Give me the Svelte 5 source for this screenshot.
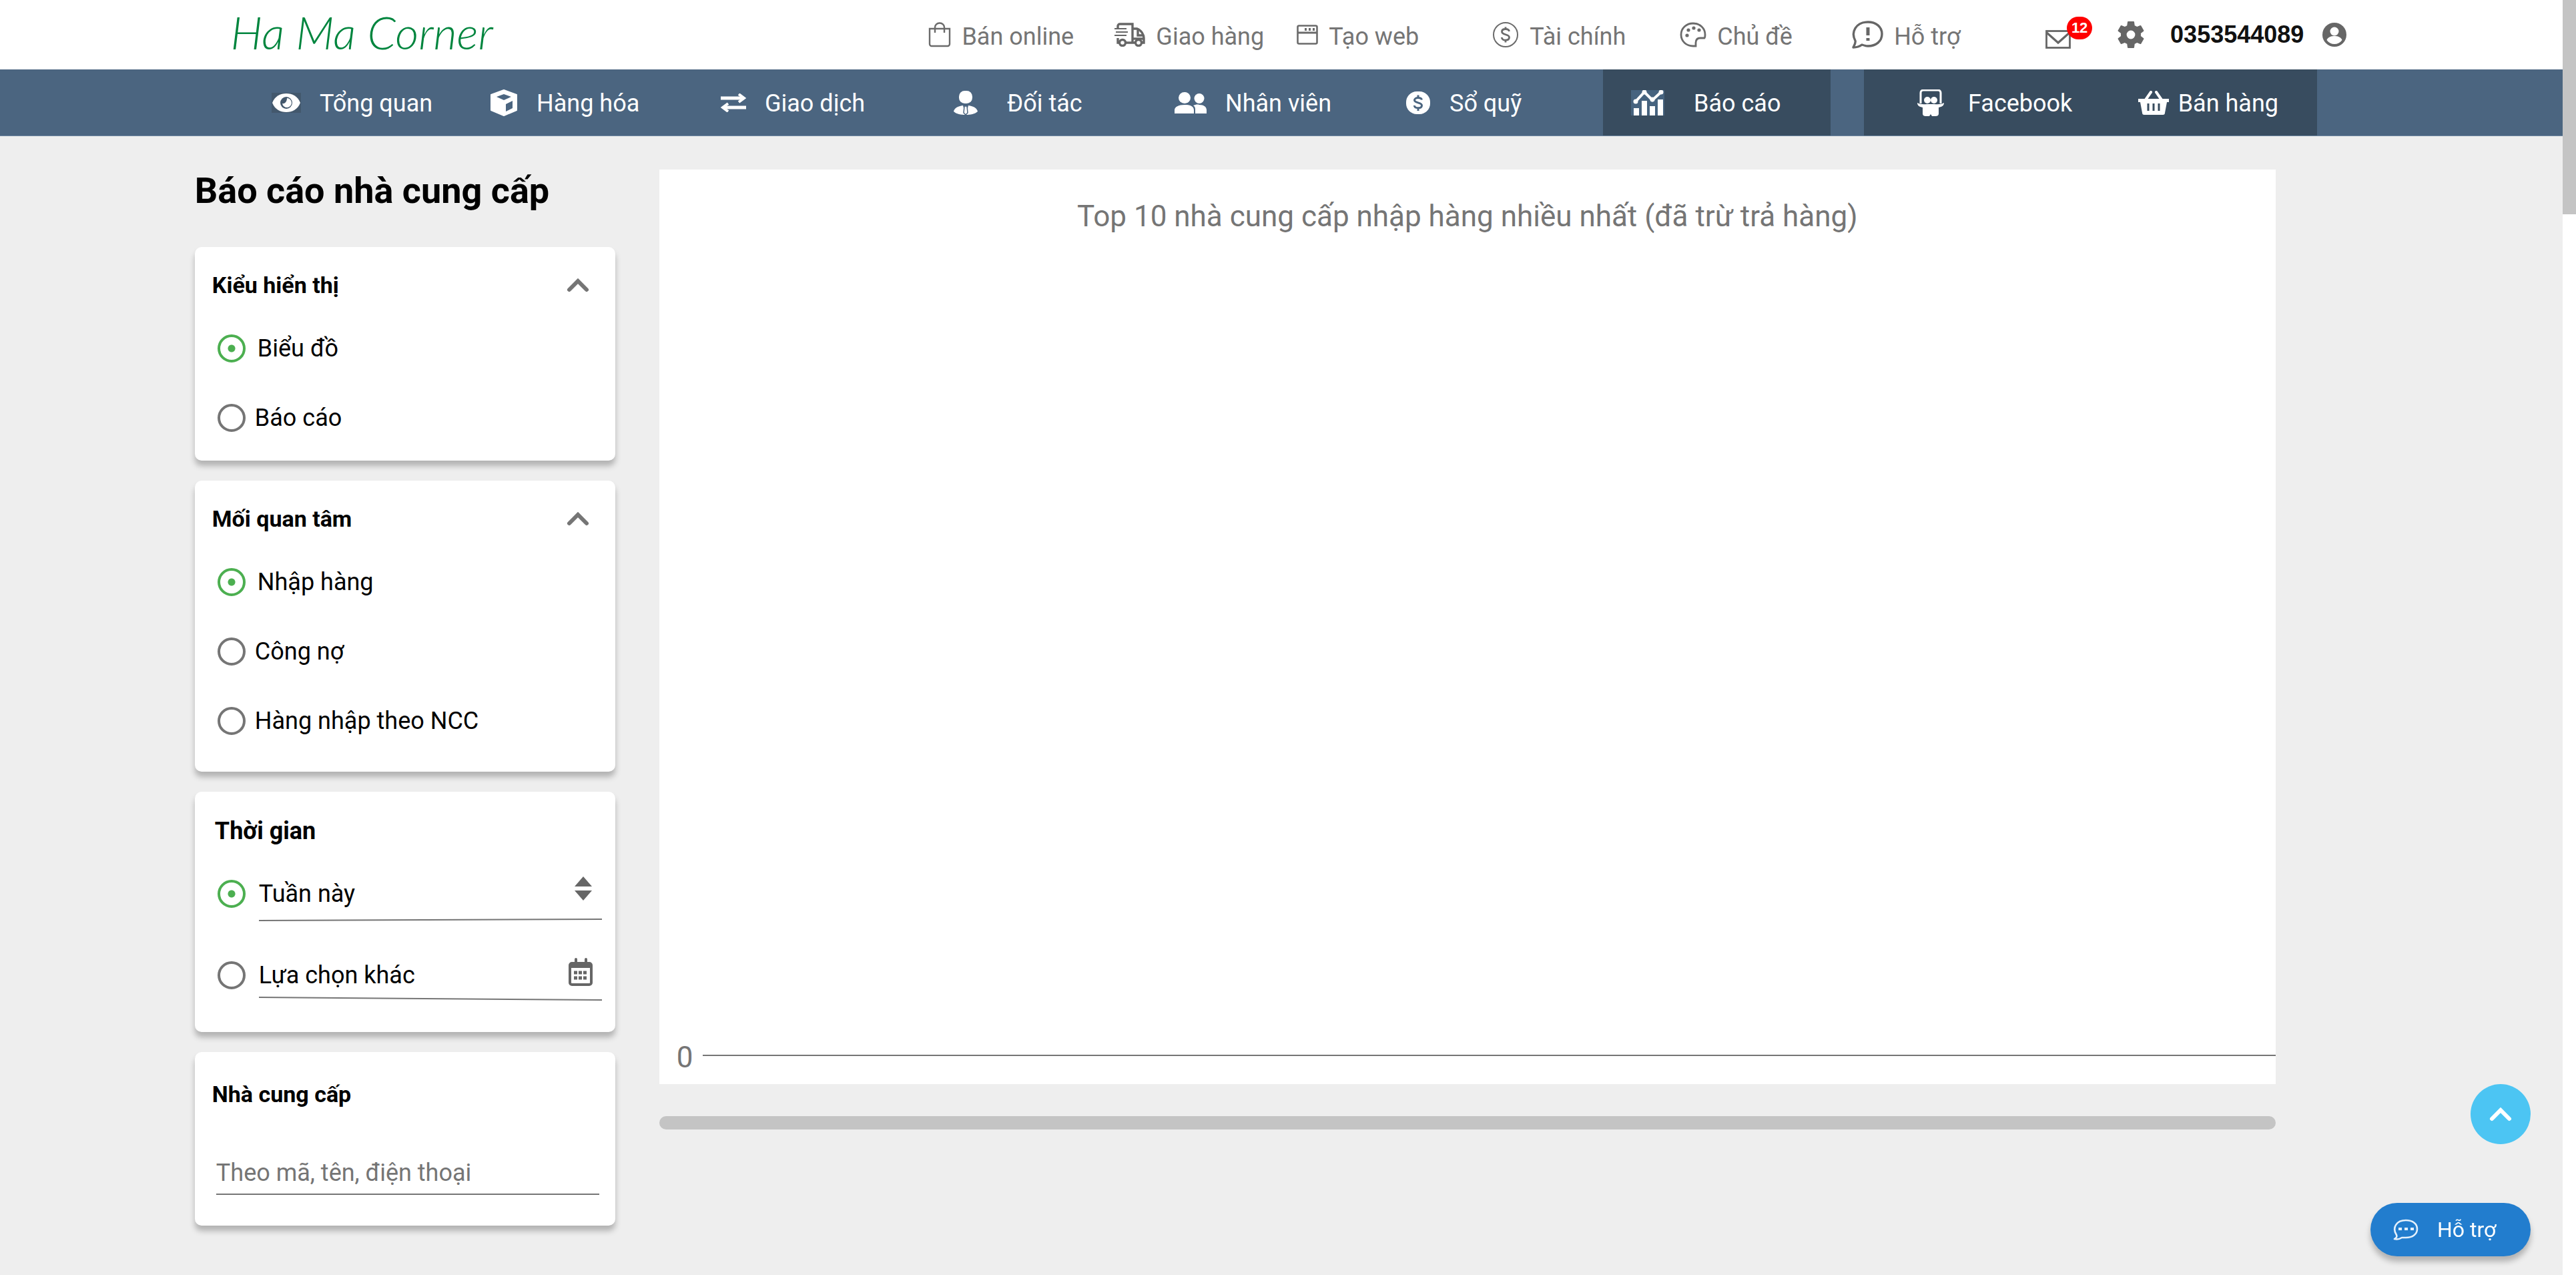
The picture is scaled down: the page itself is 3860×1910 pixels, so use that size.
<script>
  const topItems = [
    { icon: 'bag', label: 'Bán online' },
    { icon: 'truck', label: 'Giao hàng' },
    { icon: 'window', label: 'Tạo web' },
    { icon: 'coin', label: 'Tài chính' },
    { icon: 'palette', label: 'Chủ đề' },
    { icon: 'help', label: 'Hỗ trợ' }
  ];
  const navItems = [
    { icon: 'eye', label: 'Tổng quan' },
    { icon: 'box', label: 'Hàng hóa' },
    { icon: 'swap', label: 'Giao dịch' },
    { icon: 'partner', label: 'Đối tác', gap: 'wide' },
    { icon: 'staff', label: 'Nhân viên' },
    { icon: 'cash', label: 'Sổ quỹ' }
  ];
  let view = $state('Biểu đồ');
  let focus = $state('Nhập hàng');
  let time = $state('week');
  const views = ['Biểu đồ', 'Báo cáo'];
  const focuses = ['Nhập hàng', 'Công nợ', 'Hàng nhập theo NCC'];
</script>

{#snippet icon(name)}
  {#if name === 'bag'}
    <svg width="34" height="38" viewBox="0 0 34 38" fill="none" stroke="#6b6b6b" stroke-width="2.4"><path d="M2 10h30v23a3 3 0 0 1-3 3H5a3 3 0 0 1-3-3z" /><path d="M10 16V8a7 6.5 0 0 1 14 0v8" /></svg>
  {:else if name === 'truck'}
    <svg width="46" height="36" viewBox="0 0 46 36" fill="none" stroke="#666" stroke-width="3.4"><path d="M5 8V5a3 3 0 0 1 3-3h19v28H17M5 23v7h2M27 9h7c6 2 10 9 10 14v7h-3M27 30h3M35 10v9h8" /><path d="M0 9h18M2 14h18M0 19h18" stroke-width="2.2" /><circle cx="12" cy="30" r="4.5" /><circle cx="36" cy="30" r="4.5" /><path d="M27 24h17" /></svg>
  {:else if name === 'window'}
    <svg width="32" height="30" viewBox="0 0 32 30" fill="none" stroke="#6b6b6b" stroke-width="2.6"><rect x="1.5" y="1.5" width="29" height="27" rx="2" /><path d="M1 12h30" stroke-width="3" /><path d="M12 7h3M18 7h3M24 7h3" stroke-width="4" /></svg>
  {:else if name === 'coin'}
    <svg width="40" height="40" viewBox="0 0 40 40" fill="none" stroke="#6b6b6b" stroke-width="2"><circle cx="20" cy="20" r="18" /><path d="M25.500 15c-.5-2.500-2.500-3.500-5.500-3.500-3.200 0-5.500 1.500-5.500 4 0 5.500 11 3 11 8.500 0 2.800-2.500 4.200-5.500 4.200-3.200 0-5.500-1.500-5.700-4.200M20 8.500v3M20 28v3.500" stroke-width="2.800" /></svg>
  {:else if name === 'palette'}
    <svg width="40" height="38" viewBox="0 0 40 38" fill="none" stroke="#6b6b6b" stroke-width="2.800"><path d="M38 19C38 9 30 2 20 2S2 9 2 19s8 17 18 17h4v-5c0-5 3-7 7-7h6c1-1 1-3 1-5z" /><g fill="#6b6b6b" stroke="none"><circle cx="11" cy="20" r="2.600" /><circle cx="13" cy="12" r="2.600" /><circle cx="21" cy="9" r="2.600" /><circle cx="29" cy="12" r="2.600" /></g></svg>
  {:else if name === 'help'}
    <svg width="48" height="42" viewBox="0 0 48 42" fill="none" stroke="#666" stroke-width="3.400"><path d="M3 40c2-4 4-7 3-10C-1 17 7 2 25 2c12 0 21 7 21 18s-9 18-21 18c-3 0-6-1-9-2-4 3-8 4-13 4z" stroke-linejoin="round" /><path d="M25 10v12M25 26v4" stroke-width="5" /></svg>
  {:else if name === 'mail'}
    <svg width="38" height="28" viewBox="0 0 38 28" fill="none" stroke="#666" stroke-width="2.800"><rect x="1.500" y="1.500" width="35" height="25" /><path d="M2 4l17 15L36 4" stroke-width="3.200" /></svg>
  {:else if name === 'gear'}
    <svg width="40" height="40" viewBox="2 2 20 20" fill="#666"><path d="M19.430 12.980c.040-.320.070-.640.070-.980s-.030-.660-.070-.980l2.110-1.650c.190-.150.240-.420.120-.640l-2-3.460c-.120-.220-.390-.300-.610-.220l-2.490 1c-.520-.400-1.080-.730-1.690-.980l-.380-2.650C14.460 2.180 14.250 2 14 2h-4c-.250 0-.460.180-.490.420l-.380 2.650c-.610.250-1.170.590-1.690.980l-2.490-1c-.230-.090-.490 0-.610.220l-2 3.460c-.130.220-.070.490.120.640l2.110 1.650c-.040.320-.070.650-.070.980s.030.660.070.980l-2.110 1.650c-.190.150-.240.420-.120.640l2 3.460c.120.220.390.300.610.220l2.490-1c.520.400 1.080.730 1.690.980l.380 2.650c.030.240.240.420.490.420h4c.250 0 .460-.180.490-.420l.380-2.650c.610-.250 1.170-.590 1.690-.980l2.490 1c.230.090.490 0 .610-.220l2-3.460c.120-.220.070-.490-.120-.640zM12 15.200a3.200 3.200 0 1 1 0-6.400 3.200 3.200 0 0 1 0 6.400z" /></svg>
  {:else if name === 'user'}
    <svg width="36" height="36" viewBox="0 0 36 36"><circle cx="18" cy="18" r="18" fill="#666" /><circle cx="18" cy="13" r="6.500" fill="#fff" /><path d="M6.500 26c2-5 7-6 11.500-6s9.500 1 11.500 6c-3 4-7 6-11.500 6s-8.500-2-11.500-6z" fill="#fff" /></svg>
  {:else if name === 'eye'}
    <svg width="44" height="30" viewBox="0 0 44 30"><path fill="#43586d" d="M0 0h44v30H0z" /><path d="M1 15C5 5 13 1 22 1s17 4 21 14c-4 10-12 14-21 14S5 25 1 15z" fill="#fff" /><circle cx="22" cy="15" r="9" fill="#43586d" /><path d="M23 8a7 7 0 1 1-7 8c4 1 7-3 7-8z" fill="#fff" /></svg>
  {:else if name === 'box'}
    <svg width="42" height="40" viewBox="0 0 42 40"><path d="M21 1l19 7v23l-19 8-19-8V8z" fill="#fff" stroke="#fff" stroke-width="2" stroke-linejoin="round" /><path d="M21 7l11 4-11 5-11-5zM24 22l10-5v11l-10 5z" fill="#4b6580" /></svg>
  {:else if name === 'swap'}
    <svg width="38" height="28" viewBox="0 0 38 28" fill="none" stroke="#fff" stroke-width="5"><path d="M0 7h34M4 21h34" /><path d="M27 1l8 6-8 6M11 15l-8 6 8 6" stroke-width="4" /></svg>
  {:else if name === 'partner'}
    <svg width="36" height="36" viewBox="0 0 36 36" fill="#fff"><rect x="8" y="0" width="20" height="19" rx="8.500" /><path d="M14 22l3 12h2l3-12c8 1 13 4 14 9-4 4-11 5-18 5S4 35 0 31c1-5 6-8 14-9z" /><path d="M16 23h4l1 10-3 3-3-3z" stroke="#4b6580" stroke-width="1.500" /></svg>
  {:else if name === 'staff'}
    <svg width="48" height="32" viewBox="0 0 48 32" fill="#fff"><ellipse cx="15" cy="8.500" rx="9" ry="8.500" /><ellipse cx="37" cy="9.500" rx="7.500" ry="7.500" /><path d="M0 32v-5c0-5 6-8 15-8s14 3 14 8v5zM31 32v-6c0-3-1-5-3-6 3-1 6-2 9-1 7 0 11 3 11 8v5z" /></svg>
  {:else if name === 'cash'}
    <svg width="38" height="34" viewBox="0 0 38 34"><rect x="1" y="0" width="36" height="34" rx="16" fill="#fff" /><path d="M24.500 12.500c-.5-2-2.500-3-5.500-3-3.200 0-5.500 1.300-5.500 3.500 0 4.800 11 3 11 8 0 2.500-2.500 3.800-5.500 3.800-3.200 0-5.500-1.300-5.700-3.800M19 5.500v4M19 25v4" fill="none" stroke="#4b6580" stroke-width="3" /></svg>
  {:else if name === 'report'}
    <svg width="50" height="38" viewBox="0 0 50 38"><path fill="#46637f" d="M0 0h50v38H0z" /><path d="M4 27h8v11H4zM16 16h8v22h-8zM28 24h8v14h-8zM40 14h8v24h-8z" fill="#fff" /><path d="M7 17L20 3l12 12L45 3" fill="none" stroke="#fff" stroke-width="4" /><g fill="#fff"><circle cx="7" cy="17" r="3.500" /><circle cx="20" cy="3" r="3.500" /><circle cx="32" cy="14" r="3.500" /><circle cx="45" cy="3" r="3.500" /></g></svg>
  {:else if name === 'robot'}
    <svg width="40" height="40" viewBox="0 0 40 40" fill="#fff"><path d="M5 21V5a4 4 0 0 1 4-4h22a4 4 0 0 1 4 4v16" fill="none" stroke="#fff" stroke-width="3" /><circle cx="15" cy="16" r="5" /><circle cx="25" cy="16" r="5" /><path d="M0 20c4 3 10 2 20 2s16 1 20-2c0 4-3 6-8 7v9c0 3-2 4-5 4h-5l-2-3-2 3h-5c-3 0-5-1-5-4v-9c-5-1-8-3-8-7z" /></svg>
  {:else if name === 'basket'}
    <svg width="46" height="36" viewBox="0 0 46 36"><path d="M10 15L19 2M36 15L27 2" fill="none" stroke="#fff" stroke-width="4" stroke-linecap="round" /><path d="M0 12h46v5h-3l-3 16c0 2-1 3-3 3H9c-2 0-3-1-3-3L3 17H0z" fill="#fff" /><path d="M15 19v11M23 19v11M31 19v11" stroke="#384c5f" stroke-width="3" /></svg>
  {:else if name === 'chevron'}
    <svg width="36" height="24" viewBox="0 0 36 24" fill="none" stroke="currentColor" stroke-width="6" stroke-linecap="round"><path d="M5 19L18 6l13 13" /></svg>
  {:else if name === 'sort'}
    <svg width="28" height="36" viewBox="0 0 28 36" fill="#666"><path d="M14 0l13 15H1zM14 36L1 21h26z" /></svg>
  {:else if name === 'calendar'}
    <svg width="36" height="42" viewBox="0 0 36 42"><path d="M11 2v8M26 2v8" stroke="#666" stroke-width="4" stroke-linecap="round" /><rect x="2" y="8" width="32" height="32" rx="3" fill="none" stroke="#666" stroke-width="4" /><path d="M2 8h32v7H2z" fill="#666" /><path d="M8 22h5M15 22h5M22 22h5M8 30h5M15 30h5M22 30h5" stroke="#666" stroke-width="5" /></svg>
  {:else if name === 'chat'}
    <svg width="38" height="32" viewBox="0 0 38 32" fill="none" stroke="#e4f0fb" stroke-width="2.600"><path d="M2 30c3-2 4-3 3-6C-2 13 5 2 19 2c10 0 17 5 17 13s-7 13-17 13h-6c-3 2-7 3-11 2z" stroke-linejoin="round" /><path d="M8 15h5M17 15h5M26 15h5" stroke-width="4" /></svg>
  {/if}
{/snippet}

<header class="top">
  <a class="logo" href="#home">Ha Ma Corner</a>
  {#each topItems as item}
    <a class="link" href="#{item.icon}">{@render icon(item.icon)}<span>{item.label}</span></a>
  {/each}
  <button class="plain mail" aria-label="Tin nhắn">{@render icon('mail')}<span class="badge">12</span></button>
  <button class="plain" aria-label="Cài đặt">{@render icon('gear')}</button>
  <a class="account" href="#account"><span>0353544089</span>{@render icon('user')}</a>
</header>

<nav class="nav">
  {#each navItems as item}
    <a class="tab {item.gap}" href="#{item.icon}">{@render icon(item.icon)}<span>{item.label}</span></a>
  {/each}
  <a class="tab wide dark" href="#report" aria-current="page">{@render icon('report')}<span>Báo cáo</span></a>
  <div class="shop dark">
    <a class="tab medium" href="#facebook">{@render icon('robot')}<span>Facebook</span></a>
    <a class="tab narrow" href="#sale">{@render icon('basket')}<span>Bán hàng</span></a>
  </div>
</nav>

<div class="body">
  <aside>
    <h1>Báo cáo nhà cung cấp</h1>

    <section class="card">
      <div class="head"><h2>Kiểu hiển thị</h2><button class="plain" aria-label="Thu gọn kiểu hiển thị">{@render icon('chevron')}</button></div>
      {#each views as option}
        <label class="option"><input type="radio" name="view" value={option} bind:group={view} /><span>{option}</span></label>
      {/each}
    </section>

    <section class="card tall">
      <div class="head"><h2>Mối quan tâm</h2><button class="plain" aria-label="Thu gọn mối quan tâm">{@render icon('chevron')}</button></div>
      {#each focuses as option}
        <label class="option"><input type="radio" name="focus" value={option} bind:group={focus} /><span>{option}</span></label>
      {/each}
    </section>

    <section class="card time">
      <div class="head"><h2>Thời gian</h2></div>
      <div class="period">
        <input type="radio" name="time" value="week" aria-label="Khoảng thời gian" bind:group={time} />
        <div class="field">
          <div class="line">
            <select aria-label="Khoảng thời gian"><option>Tuần này</option></select>
            {@render icon('sort')}
          </div>
          <svg class="rule" viewBox="0 0 514 20" preserveAspectRatio="none"><path d="M0 14L514 12" stroke="#757575" stroke-width="2" /></svg>
        </div>
      </div>
      <div class="period">
        <input id="other" type="radio" name="time" value="other" bind:group={time} />
        <div class="field">
          <div class="line">
            <label for="other">Lựa chọn khác</label>
            <button class="plain" aria-label="Chọn ngày">{@render icon('calendar')}</button>
          </div>
          <svg class="rule" viewBox="0 0 514 20" preserveAspectRatio="none"><path d="M0 7L514 11" stroke="#757575" stroke-width="2" /></svg>
        </div>
      </div>
    </section>

    <section class="card supplier">
      <div class="head"><h2><label for="supplier">Nhà cung cấp</label></h2></div>
      <input id="supplier" type="text" placeholder="Theo mã, tên, điện thoại" />
    </section>
  </aside>

  <main>
    <section class="chart">
      <h2>Top 10 nhà cung cấp nhập hàng nhiều nhất (đã trừ trả hàng)</h2>
      <div class="axis"><span>0</span><hr /></div>
    </section>
    <div class="hscroll"></div>
  </main>
</div>

<div class="vscroll"><div class="thumb"></div></div>

<div class="floating">
  <button class="up" aria-label="Lên đầu trang">{@render icon('chevron')}</button>
  <button class="support">{@render icon('chat')}<span>Hỗ trợ</span></button>
</div>

<style>
  :global(body) {
    background: #eee;
    font-family: Roboto, 'Noto Sans', sans-serif;
    font-size: 36px;
    line-height: 42px;
    color: #000;
  }
  :global(#app) {
    padding-right: 20px;
  }
  svg {
    display: block;
    flex: none;
  }
  a {
    color: inherit;
    text-decoration: none;
    white-space: nowrap;
  }
  h1,
  h2 {
    margin: 0;
  }
  button,
  input,
  select {
    font: inherit;
    color: inherit;
    border: 0;
    padding: 0;
    margin: 0;
    background: none;
  }
  .plain {
    display: flex;
    position: relative;
  }

  .top {
    box-sizing: border-box;
    height: 104px;
    padding-left: 9%;
    background: #fff;
    color: #757575;
    display: grid;
    grid-template-columns: 1046fr 279fr 273fr 293fr 281fr 257fr 291fr 108fr 79fr 588fr;
    align-items: center;
  }
  .logo {
    padding-bottom: 8px;
    font-family: Lato, sans-serif;
    font-style: italic;
    font-weight: 300;
    font-size: 68px;
    line-height: 80px;
    color: #00853e;
  }
  .link,
  .account {
    display: flex;
    align-items: center;
    gap: 16px;
  }
  .link span {
    padding-top: 6px;
  }
  .account {
    gap: 28px;
    font-family: 'Liberation Sans', Arial, sans-serif;
    font-weight: bold;
    color: #111;
  }
  .mail {
    padding: 28px 0 14px;
  }
  .badge {
    position: absolute;
    left: 32px;
    top: 8px;
    width: 38px;
    height: 34px;
    border-radius: 17px;
    background: #f00;
    color: #fff;
    font-family: 'Liberation Sans', Arial, sans-serif;
    font-size: 22px;
    font-weight: bold;
    line-height: 34px;
    text-align: center;
  }

  .nav {
    box-sizing: border-box;
    height: 100px;
    border-bottom: 1px solid #6d86a0;
    padding-left: 10.6%;
    background: #4b6580;
    color: #fff;
    display: grid;
    grid-template-columns: 327fr 346fr 349fr 331fr 346fr 296fr 341fr 50fr 679fr 368fr;
  }
  .tab {
    display: flex;
    align-items: center;
    gap: 28px;
  }
  .tab span {
    padding-top: 2px;
  }
  .wide {
    gap: 44px;
  }
  .medium {
    gap: 36px;
  }
  .narrow {
    gap: 14px;
  }
  .dark {
    background: #384c5f;
  }
  .tab.dark {
    padding-left: 42px;
  }
  .shop {
    grid-column: 9;
    display: flex;
    justify-content: space-between;
    padding: 0 58px 0 80px;
  }

  .body {
    display: grid;
    grid-template-columns: 630px 1fr;
    gap: 66px;
    padding: 50px 11.2% 60px 7.6%;
  }
  aside {
    display: flex;
    flex-direction: column;
    gap: 30px;
  }
  h1 {
    font-size: 54px;
    line-height: 64px;
    font-weight: 700;
    padding-bottom: 22px;
    white-space: nowrap;
  }
  .card {
    box-sizing: border-box;
    min-height: 320px;
    padding: 36px 24px 12px 26px;
    border-radius: 10px;
    background: #fff;
    box-shadow: 0 8px 8px rgba(0, 0, 0, 0.25);
  }
  .tall {
    padding-bottom: 24px;
  }
  .card h2 {
    font-size: 34px;
    line-height: 42px;
    font-weight: 700;
  }
  .head {
    display: flex;
    align-items: center;
    justify-content: space-between;
    padding-right: 14px;
    margin-bottom: 22px;
  }
  .head button {
    color: #757575;
  }
  .option {
    display: flex;
    align-items: center;
    gap: 14px;
    height: 104px;
    padding-left: 8px;
  }
  input[type='radio'] {
    appearance: none;
    flex: none;
    box-sizing: border-box;
    width: 42px;
    height: 42px;
    border: 4px solid #757575;
    border-radius: 50%;
  }
  input[type='radio']:checked {
    border-color: #4caf50;
    background: radial-gradient(circle, #4caf50 5px, transparent 6px);
  }
  .option input:checked + span {
    padding-left: 4px;
  }
  .card.time {
    min-height: 360px;
    padding: 38px 20px 0 30px;
  }
  .card.time h2 {
    font-size: 36px;
  }
  .time .head {
    margin-bottom: 12px;
  }
  .period {
    display: flex;
    gap: 20px;
    padding-left: 4px;
    height: 122px;
    align-items: center;
  }
  .field {
    flex: 1;
    padding-top: 20px;
  }
  .line {
    display: flex;
    align-items: center;
    justify-content: space-between;
    height: 52px;
    padding-right: 14px;
  }
  .line svg,
  .line button {
    align-self: flex-start;
  }
  select {
    appearance: none;
    flex: 1;
    height: 42px;
  }
  .rule {
    width: 100%;
    height: 20px;
  }
  .supplier {
    min-height: 260px;
    padding-top: 42px;
  }
  .supplier .head {
    margin-bottom: 46px;
  }
  .supplier input {
    box-sizing: border-box;
    width: 574px;
    max-width: 100%;
    height: 84px;
    margin-left: 6px;
    border-bottom: 2px solid #757575;
    padding-top: 20px;
  }
  .supplier input::placeholder {
    color: #757575;
    opacity: 1;
  }

  .chart {
    display: flex;
    flex-direction: column;
    justify-content: space-between;
    min-height: 1370px;
    background: #fff;
    color: #757575;
    font-size: 44px;
    line-height: 52px;
  }
  .chart h2 {
    padding-top: 44px;
    font-size: 44px;
    font-weight: 400;
    text-align: center;
  }
  .axis {
    display: flex;
    align-items: center;
    gap: 14px;
    padding: 0 0 14px 26px;
  }
  .axis hr {
    flex: 1;
    margin: 0 0 6px;
    border: 0;
    height: 2px;
    background: #757575;
  }
  .hscroll {
    height: 20px;
    margin-top: 48px;
    border-radius: 10px;
    background: #c4c4c4;
  }
  .vscroll {
    position: fixed;
    inset: 0 0 0 auto;
    width: 20px;
    background: #fff;
  }
  .thumb {
    height: 321px;
    background: #c4c4c4;
  }
  .floating {
    position: fixed;
    right: 68px;
    bottom: 28px;
    display: flex;
    flex-direction: column;
    align-items: flex-end;
    gap: 88px;
  }
  .up {
    display: grid;
    place-content: center;
    width: 90px;
    height: 90px;
    border-radius: 50%;
    background: #4cc5f3;
    color: #fff;
  }
  .support {
    display: flex;
    align-items: center;
    gap: 28px;
    width: 240px;
    height: 80px;
    padding-left: 34px;
    border-radius: 40px;
    background: #227dce;
    color: #fff;
    font-size: 32px;
    box-shadow: 0 8px 8px rgba(0, 0, 0, 0.25);
  }
</style>
